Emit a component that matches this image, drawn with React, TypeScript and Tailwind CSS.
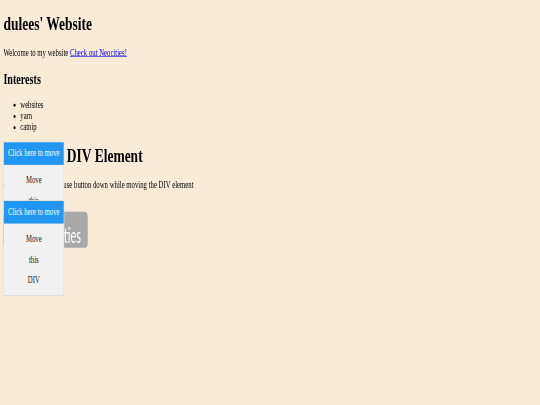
// App.tsx
const serif = { fontFamily: '"Liberation Serif", serif' };

function DragBox({ top }: { top: string }) {
  return (
    <div className={`absolute left-2 z-10 border border-[#d3d3d3] bg-[#f1f1f1] text-center ${top}`}>
      <div className="bg-[#2196f3] px-2.5 pt-[9px] pb-[11px] text-white">Click here to move</div>
      <div className="leading-[19px] text-[#222]">
        <p className="my-4">Move</p>
        <p className="my-4">this</p>
        <p className="my-4">DIV</p>
      </div>
    </div>
  );
}

export default function App() {
  return (
    <div className="h-[405px] w-[540px] overflow-hidden bg-[#faebd7] blur-[0.4px]">
      {/* page was captured at a wider viewport and squashed into the window */}
      <div
        className="relative h-[683px] w-[1280px] origin-top-left scale-x-[0.4219] scale-y-[0.593] px-2 text-base leading-[18.4px] text-black"
        style={serif}
      >
        <h1 className="mb-[21.44px] pt-[21.44px] text-[32px] leading-[37px] font-bold">dulees' Website</h1>
        <p className="my-4">
          Welcome to my website{' '}
          <a href="#" className="text-[#0000ee] underline">
            Check out Neocities!
          </a>
        </p>
        <h2 className="mt-[23px] mb-[18px] text-2xl leading-[27.5px] font-bold">Interests</h2>
        <ul className="my-4 list-disc pl-10 leading-[19px]">
          <li>websites</li>
          <li>yarn</li>
          <li>catnip</li>
        </ul>
        <h1 className="mt-[20.4px] mb-[21.44px] text-[32px] leading-[37px] font-bold">Draggable DIV Element</h1>
        <p className="my-4">Click and hold the mouse button down while moving the DIV element</p>
        <div className="mt-9 flex h-[61px] w-[200px] items-center justify-end rounded-lg bg-[#a9a9a9] pr-[16px]">
          <span
            className="inline-block origin-right scale-x-[0.72] pt-[14px] text-[36px] leading-none text-white"
            style={{ fontFamily: 'Lato, sans-serif' }}
          >
            Neocities
          </span>
        </div>
        <DragBox top="top-[239px]" />
        <DragBox top="top-[338px]" />
      </div>
    </div>
  );
}
